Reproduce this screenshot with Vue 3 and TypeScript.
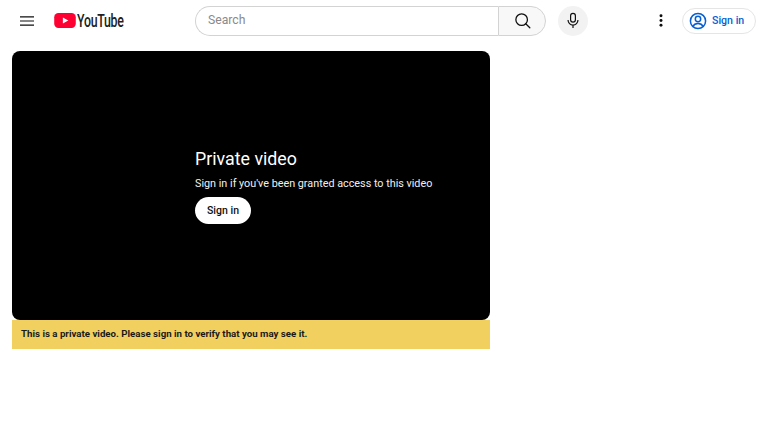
<script setup lang="ts">
const title = 'Private video'
const subtitle = "Sign in if you've been granted access to this video"
const notice = 'This is a private video. Please sign in to verify that you may see it.'
</script>

<template>
  <div class="page">
    <header class="masthead">
      <div class="start">
        <svg class="menu" width="14" height="10" viewBox="0 0 14 10"><path d="M0 .2h14v1.200H0zM0 4.400h14v1.200H0zM0 8.600h14v1.200H0z" fill="#0f0f0f"/></svg>
        <div class="logo">
          <svg width="22" height="15" viewBox="0 0 23 16"><rect width="23" height="16" rx="4.500" fill="#ff0033"/><path d="M9.200 4.700 15 8l-5.800 3.300z" fill="#fff"/></svg>
          <span class="wordmark">YouTube</span>
        </div>
      </div>
      <div class="center">
        <div class="search">
          <div class="field">Search</div>
          <div class="search-btn">
            <svg width="17" height="17" viewBox="0 0 20 20" fill="none" stroke="#0f0f0f" stroke-width="1.500"><circle cx="9" cy="9" r="6.800"/><path d="m13.800 13.800 4.800 4.800" stroke-linecap="round"/></svg>
          </div>
        </div>
        <div class="mic">
          <svg width="16" height="17" viewBox="0 0 20 20" fill="none" stroke="#0f0f0f" stroke-width="1.500"><rect x="7" y="1" width="6" height="11" rx="3"/><path d="M3.800 9.500a6.200 6.200 0 0 0 12.400 0M10 15.700v3.800" /></svg>
        </div>
      </div>
      <div class="end">
        <svg class="dots" width="4" height="13" viewBox="0 0 4 14"><circle cx="2" cy="2" r="1.600" fill="#0f0f0f"/><circle cx="2" cy="7" r="1.600" fill="#0f0f0f"/><circle cx="2" cy="12" r="1.600" fill="#0f0f0f"/></svg>
        <div class="signin-pill">
          <svg width="18" height="18" viewBox="0 0 18 18" fill="none" stroke="#065fd4" stroke-width="1.500"><circle cx="9" cy="9" r="7.600"/><circle cx="9" cy="7" r="2.700"/><path d="M3.900 14.400c1-2.200 3-3 5.100-3s4.100.8 5.100 3"/></svg>
          <span>Sign in</span>
        </div>
      </div>
    </header>

    <main class="content">
      <section class="player">
        <div class="message">
          <div class="title">{{ title }}</div>
          <div class="subtitle">{{ subtitle }}</div>
          <div class="signin-btn">Sign in</div>
        </div>
      </section>
      <div class="banner">{{ notice }}</div>
    </main>
  </div>
</template>

<style>
html, body { margin: 0; background: #fff; }
</style>

<style scoped>
.page {
  width: 768px;
  height: 432px;
  overflow: hidden;
  background: #fff;
  font-family: Roboto, "Liberation Sans", sans-serif;
}
.masthead {
  height: 41px;
  display: flex;
  align-items: center;
  box-sizing: border-box;
}
.start {
  width: 195px;
  display: flex;
  align-items: center;
  padding-left: 20px;
  box-sizing: border-box;
}
.logo {
  margin-left: 20px;
  display: flex;
  align-items: center;
}
.wordmark {
  display: inline-block;
  font-size: 19px;
  font-weight: 500;
  color: #212121;
  letter-spacing: -0.4px;
  margin-left: 1px;
  transform: scaleX(0.65);
  transform-origin: left center;
}
.center {
  display: flex;
  align-items: center;
  width: 393px;
}
.search {
  width: 351px;
  height: 30px;
  display: flex;
  box-sizing: border-box;
}
.field {
  flex: 1;
  border: 1px solid #d3d3d3;
  border-right: none;
  border-radius: 15px 0 0 15px;
  padding-left: 12px;
  font-size: 12.2px;
  line-height: 27px;
  color: #8a8a8a;
}
.search-btn {
  width: 46px;
  border: 1px solid #d3d3d3;
  border-radius: 0 15px 15px 0;
  background: #f8f8f8;
  display: flex;
  align-items: center;
  justify-content: center;
}
.mic {
  width: 30px;
  height: 30px;
  margin-left: 12px;
  border-radius: 50%;
  background: #f2f2f2;
  display: flex;
  align-items: center;
  justify-content: center;
}
.end {
  flex: 1;
  display: flex;
  align-items: center;
  padding-left: 71px;
}
.signin-pill {
  margin-left: 19px;
  width: 74px;
  height: 26px;
  box-sizing: border-box;
  border: 1px solid #e5e5e5;
  border-radius: 13px;
  display: flex;
  align-items: center;
  padding-left: 6px;
  gap: 5px;
  font-size: 10.6px;
  font-weight: 500;
  color: #065fd4;
}
.content {
  margin: 10px 0 0 12px;
  width: 478px;
}
.player {
  height: 269px;
  background: #000;
  border-radius: 8px;
  display: flex;
  align-items: center;
  padding-left: 183px;
  box-sizing: border-box;
}
.message { color: #fff; margin-top: -1px; }
.title {
  font-size: 17.8px;
  line-height: 24px;
}
.subtitle {
  margin-top: 6px;
  font-size: 10.8px;
  line-height: 14px;
  color: #f1f1f1;
}
.signin-btn {
  margin-top: 6px;
  width: 56px;
  height: 27px;
  border-radius: 14px;
  background: #fff;
  color: #0f0f0f;
  font-size: 10.5px;
  font-weight: 500;
  display: flex;
  align-items: center;
  justify-content: center;
}
.banner {
  height: 29px;
  background: #f2d060;
  padding-left: 9px;
  font-size: 9.7px;
  font-weight: 700;
  line-height: 28px;
  color: #1a1a1a;
}
</style>
